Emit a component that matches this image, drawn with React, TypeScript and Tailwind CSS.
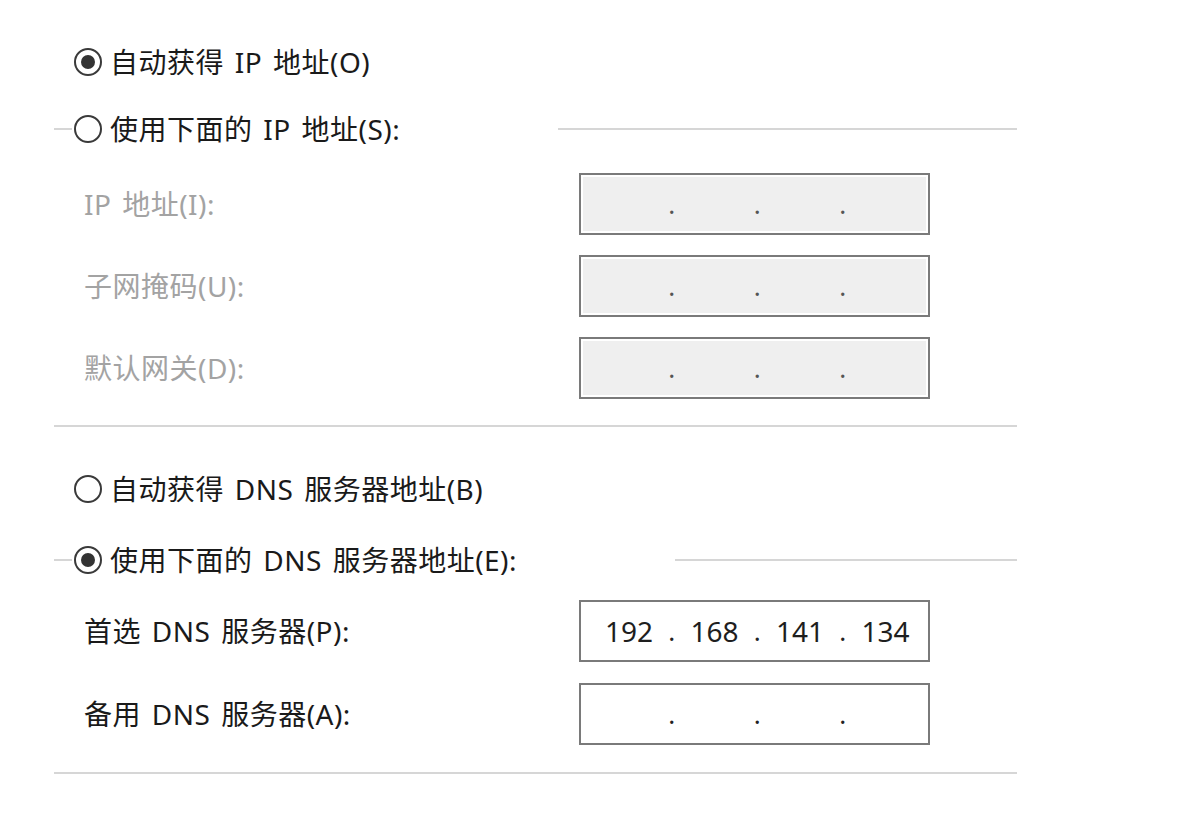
import React from 'react';

const FONT = "font-['Noto_Sans','Noto_Sans_CJK_SC',sans-serif]";

const Radio = ({ checked, label }: { checked: boolean; label: string }) => (
  <div className="flex items-center gap-[8px] h-[34px]">
    <div className="w-[28px] h-[28px] rounded-full border-2 border-[#3a3a3a] bg-white flex items-center justify-center shrink-0">
      {checked && <div className="w-[14px] h-[14px] rounded-full bg-[#333333]" />}
    </div>
    <span className="text-[28px] leading-none tracking-[0.5px] text-[#1a1a1a] whitespace-nowrap [word-spacing:3px]">
      {label}
    </span>
  </div>
);

const IpBox = ({ parts, disabled }: { parts: string[]; disabled?: boolean }) => (
  <div className="w-[351px] h-[62px] border-2 border-[#7a7a7a] p-[2px] bg-white">
    <div className={`h-full flex items-center pl-[11px] ${disabled ? 'bg-[#efefef]' : 'bg-white'}`}>
      {parts.map((p, i) => (
        <React.Fragment key={i}>
          {i > 0 && (
            <span className={`w-[15.5px] text-center text-[26px] leading-none ${disabled ? 'text-[#555555]' : 'text-[#222222]'}`}>.</span>
          )}
          <span className="w-[70px] text-center text-[28px] leading-none text-[#1e1e1e]">{p}</span>
        </React.Fragment>
      ))}
    </div>
  </div>
);

const Row = ({ label, parts, disabled }: { label: string; parts: string[]; disabled?: boolean }) => (
  <div className="flex items-center">
    <div
      className={`w-[525px] pl-[30px] text-[28px] leading-none tracking-[0.5px] whitespace-nowrap [word-spacing:3px] ${
        disabled ? 'text-[#a3a3a3]' : 'text-[#1a1a1a]'
      }`}
    >
      {label}
    </div>
    <IpBox parts={parts} disabled={disabled} />
  </div>
);

const empty = ['', '', '', ''];

export default function App() {
  return (
    <div className={`w-[1200px] h-[831px] bg-white overflow-hidden ${FONT}`}>
      <div className="w-[963px] ml-[54px] pt-[45px]">
        <div className="ml-[18px] pl-[2px]">
          <Radio checked label="自动获得 IP 地址(O)" />
        </div>

        {/* static ip group */}
        <div className="mt-[49px] border-t-2 border-b-2 border-[#d6d6d6] pb-[26px]">
          <div className="-mt-[18px] ml-[18px] pl-[2px] w-[486px] bg-white">
            <Radio checked={false} label="使用下面的 IP 地址(S):" />
          </div>
          <div className="mt-[27px] flex flex-col gap-[20px]">
            <Row label="IP 地址(I):" parts={empty} disabled />
            <Row label="子网掩码(U):" parts={empty} disabled />
            <Row label="默认网关(D):" parts={empty} disabled />
          </div>
        </div>

        <div className="mt-[45px] ml-[18px] pl-[2px]">
          <Radio checked={false} label="自动获得 DNS 服务器地址(B)" />
        </div>

        {/* dns group */}
        <div className="mt-[53px] border-t-2 border-b-2 border-[#d6d6d6] pb-[27px]">
          <div className="-mt-[18px] ml-[18px] pl-[2px] w-[603px] bg-white">
            <Radio checked label="使用下面的 DNS 服务器地址(E):" />
          </div>
          <div className="mt-[23px] flex flex-col gap-[21px]">
            <Row label="首选 DNS 服务器(P):" parts={['192', '168', '141', '134']} />
            <Row label="备用 DNS 服务器(A):" parts={empty} />
          </div>
        </div>
      </div>
    </div>
  );
}
